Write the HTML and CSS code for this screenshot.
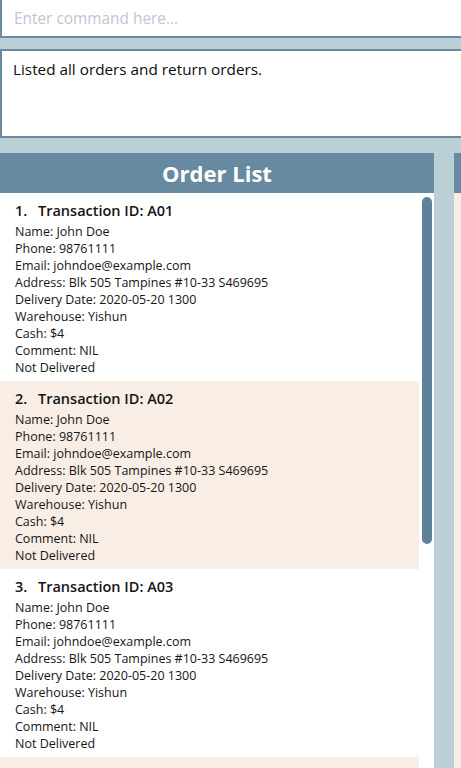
FILE: index.html
```html
<!DOCTYPE html>
<html>
<head>
<meta charset="utf-8">
<link rel="stylesheet" href="styles.css">
</head>
<body>
<div class="app">
  <div class="command"><span class="placeholder">Enter command here...</span></div>
  <div class="result">Listed all orders and return orders.</div>
  <div class="panels">
    <section class="panel orders">
      <div class="panel-header">Order List</div>
      <div class="list">
        <div class="card">
          <div class="title"><span class="idx">1.</span>Transaction ID: A01</div>
          <div class="field">Name: John Doe</div>
          <div class="field">Phone: 98761111</div>
          <div class="field">Email: johndoe@example.com</div>
          <div class="field">Address: Blk 505 Tampines #10-33 S469695</div>
          <div class="field">Delivery Date: 2020-05-20 1300</div>
          <div class="field">Warehouse: Yishun</div>
          <div class="field">Cash: $4</div>
          <div class="field">Comment: NIL</div>
          <div class="field">Not Delivered</div>
        </div>
        <div class="card alt">
          <div class="title"><span class="idx">2.</span>Transaction ID: A02</div>
          <div class="field">Name: John Doe</div>
          <div class="field">Phone: 98761111</div>
          <div class="field">Email: johndoe@example.com</div>
          <div class="field">Address: Blk 505 Tampines #10-33 S469695</div>
          <div class="field">Delivery Date: 2020-05-20 1300</div>
          <div class="field">Warehouse: Yishun</div>
          <div class="field">Cash: $4</div>
          <div class="field">Comment: NIL</div>
          <div class="field">Not Delivered</div>
        </div>
        <div class="card">
          <div class="title"><span class="idx">3.</span>Transaction ID: A03</div>
          <div class="field">Name: John Doe</div>
          <div class="field">Phone: 98761111</div>
          <div class="field">Email: johndoe@example.com</div>
          <div class="field">Address: Blk 505 Tampines #10-33 S469695</div>
          <div class="field">Delivery Date: 2020-05-20 1300</div>
          <div class="field">Warehouse: Yishun</div>
          <div class="field">Cash: $4</div>
          <div class="field">Comment: NIL</div>
          <div class="field">Not Delivered</div>
        </div>
        <div class="card alt short"></div>
        <div class="scrollbar"></div>
      </div>
    </section>
    <section class="panel second">
      <div class="panel-header"></div>
      <div class="second-body"></div>
    </section>
  </div>
</div>
</body>
</html>
```

FILE: styles.css
```css
html, body {
  margin: 0;
  padding: 0;
  height: 768px;
  overflow: hidden;
  background: #bacfd6;
  font-family: "Open Sans", "Noto Sans", sans-serif;
}

.app {
  width: 461px;
  display: flex;
  flex-direction: column;
}

.command {
  height: 36px;
  background: #ffffff;
  border-left: 2px solid #678aa1;
  border-bottom: 2px solid #678aa1;
  display: flex;
  align-items: center;
  padding-left: 12px;
}

.placeholder {
  color: #c6c3d2;
  font-size: 15.4px;
}

.result {
  margin-top: 11px;
  background: #ffffff;
  border: 2px solid #678aa1;
  border-right: none;
  padding: 8px 11px;
  box-sizing: border-box;
  height: 89px;
  font-size: 15.3px;
  color: #0d0d0d;
}

.panels {
  margin-top: 15px;
  display: flex;
  gap: 20px;
}

.panel {
  display: flex;
  flex-direction: column;
}

.orders {
  width: 434px;
}

.second {
  flex: 1;
}

.panel-header {
  height: 40px;
  background: #678aa1;
  color: #ffffff;
  font-weight: 700;
  font-size: 22px;
  display: flex;
  align-items: center;
  justify-content: center;
}

.second-body {
  height: 575px;
  background: #f9eee5;
}

.list {
  position: relative;
  background: #ffffff;
  height: 575px;
  overflow: hidden;
}

.card {
  width: 419px;
  height: 188px;
  box-sizing: border-box;
  padding: 7px 0 0 15px;
  color: #151515;
}

.card.short {
  height: 11px;
}

.card.alt {
  background: #f9eee5;
}

.title {
  font-size: 14.5px;
  font-weight: 600;
  line-height: 22px;
  margin-bottom: 1px;
}

.idx {
  display: inline-block;
  width: 23px;
}

.field {
  font-size: 12.5px;
  line-height: 17px;
}

.scrollbar {
  position: absolute;
  left: 422px;
  top: 4px;
  width: 10px;
  height: 347px;
  border-radius: 5px;
  background: #5f829b;
}
```
